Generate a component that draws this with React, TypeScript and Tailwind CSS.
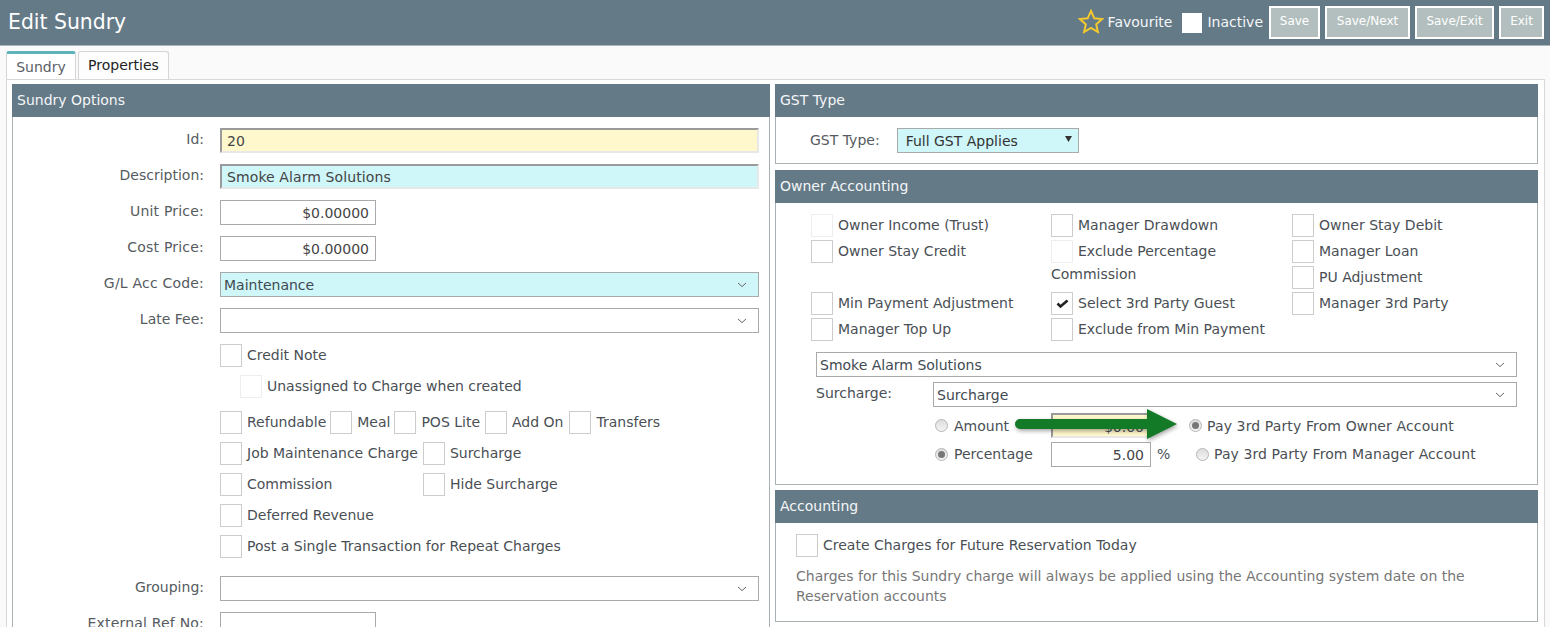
import React from "react";

const font = { fontFamily: '"DejaVu Sans", Verdana, sans-serif' };

function Chevron() {
  return (
    <svg width="10" height="6" viewBox="0 0 10 6" className="shrink-0">
      <path d="M1 1l4 3.6L9 1" fill="none" stroke="#666" strokeWidth="1" />
    </svg>
  );
}

function Box({ light, checked }: { light?: boolean; checked?: boolean }) {
  return (
    <span
      className={`inline-flex w-[22px] h-[23px] shrink-0 items-center justify-center border bg-white ${light ? "border-[#eeeeee]" : "border-[#cccccc]"}`}
    >
      {checked && (
        <svg width="13" height="11" viewBox="0 0 13 11">
          <path d="M1.5 5.500l3 3L11.500 2.500" fill="none" stroke="#222" strokeWidth="2.6" />
        </svg>
      )}
    </span>
  );
}

function Check({ label, light, checked, className = "" }: { label: string; light?: boolean; checked?: boolean; className?: string }) {
  return (
    <div className={`flex items-start gap-[5px] ${className}`}>
      <Box light={light} checked={checked} />
      <span className="leading-[23px] whitespace-nowrap text-[#4a4f55]">{label}</span>
    </div>
  );
}

function Panel({ title, className, children }: { title: string; className: string; children: React.ReactNode }) {
  return (
    <section className={`border border-[#a9b1b5] border-t-0 bg-white ${className}`}>
      <h2 className="m-0 h-[33px] -mx-px bg-[#647a87] pl-[5px] text-[14px] leading-[32px] font-normal text-[#f4f6f7]">{title}</h2>
      {children}
    </section>
  );
}

function Select({ value, bg = "bg-white", className = "" }: { value?: string; bg?: string; className?: string }) {
  return (
    <div className={`flex h-[25px] items-center justify-between border border-[#aaaaaa] pl-[3px] pr-[11px] text-[#3f4a52] ${bg} ${className}`}>
      <span className="pt-[1px]">{value}</span>
      <Chevron />
    </div>
  );
}

function Row({ label, wide, children }: { label: string; wide?: boolean; children: React.ReactNode }) {
  return (
    <div className="mb-[11px] flex h-[25px]">
      <label className={`w-[191px] shrink-0 text-right leading-[22px] text-[#555b60] ${wide ? "tracking-[0.2px]" : ""}`}>{label}</label>
      <div className="ml-[16px] w-[539px]">{children}</div>
    </div>
  );
}

function Money({ value }: { value?: string }) {
  return <div className="h-[25px] w-[156px] border border-[#aaaaaa] bg-white pr-[6px] text-right leading-[25px] text-[#444]">{value}</div>;
}

function Radio({ on }: { on?: boolean }) {
  return (
    <span className="inline-flex h-[13px] w-[13px] shrink-0 items-center justify-center rounded-full border border-[#b5b5b5] bg-gradient-to-b from-[#dddddd] to-[#f4f4f4]">
      {on && <span className="h-[7px] w-[7px] rounded-full bg-[#777]" />}
    </span>
  );
}

function Btn({ label, w }: { label: string; w: string }) {
  return (
    <button className={`h-[33px] ${w} border-2 border-white bg-[#b3bfbe] pb-[3px] text-[12px] text-white`}>{label}</button>
  );
}

export default function App() {
  return (
    <div style={font} className="relative h-[627px] w-[1550px] overflow-hidden bg-[#fafafa] text-[14px]">
      <header className="flex h-[46px] items-start justify-between border-b border-[#a9b5bb] bg-[#647a87]">
        <h1 className="m-0 ml-[8px] text-[20.4px] leading-[44px] font-normal text-white">Edit Sundry</h1>
        <div className="flex items-start pr-[6px]">
          <svg width="26" height="25" viewBox="0 0 26 25" className="mt-[9px]">
            <path d="M13 2l3.3 7.3 7.7.8-5.8 5.2 1.700 7.700L13 19l-6.900 4 1.700-7.700L2 10.100l7.700-.8z" fill="none" stroke="#f4c92e" strokeWidth="2" />
          </svg>
          <span className="ml-[4px] mt-[12px] text-[#f4f6f7]">Favourite</span>
          <span className="ml-[10px] mt-[13px] h-[20px] w-[20px] bg-white" />
          <span className="ml-[5px] mt-[12px] mr-[6px] text-[#f4f6f7]">Inactive</span>
          <div className="mt-[6px] flex gap-[5px]">
            <Btn label="Save" w="w-[51px]" />
            <Btn label="Save/Next" w="w-[85px]" />
            <Btn label="Save/Exit" w="w-[79px]" />
            <Btn label="Exit" w="w-[45px]" />
          </div>
        </div>
      </header>

      <nav className="ml-[6px] mt-[5px] flex h-[28px] items-end gap-[2px]">
        <div className="h-[28px] w-[70px] rounded-t-[3px] border border-b-0 border-t-[3px] border-[#d5d5d5] border-t-[#5fb3bd] bg-white pt-[3px] text-center text-[#5b6166]">Sundry</div>
        <div className="h-[28px] w-[91px] rounded-t-[3px] border border-b-0 border-[#d5d5d5] bg-[#fdfdfd] pt-[3px] text-center text-[#222]">Properties</div>
      </nav>

      <main className="ml-[6px] mr-[5px] flex h-[560px] gap-[5px] border border-[#d8d8d8] bg-white pl-[5px] pr-[6px] pt-[4px]">
        <Panel title="Sundry Options" className="h-[600px] w-[758px] shrink-0">
          <div className="pt-[11px]">
            <Row label="Id:">
              <div className="h-[25px] border-[2px] border-b-[#e8e8e8] border-r-[#e8e8e8] border-[#9a9a9a] bg-[#fff8cd] pl-[5px] leading-[23px] text-[#444]">20</div>
            </Row>
            <Row label="Description:">
              <div className="h-[25px] border-[2px] border-b-[#e8e8e8] border-r-[#e8e8e8] border-[#9a9a9a] bg-[#cff6f9] pl-[5px] leading-[23px] tracking-[0.1px] text-[#444]">Smoke Alarm Solutions</div>
            </Row>
            <Row label="Unit Price:" wide><Money value="$0.00000" /></Row>
            <Row label="Cost Price:" wide><Money value="$0.00000" /></Row>
            <Row label="G/L Acc Code:" wide><Select value="Maintenance" bg="bg-[#cff6f9]" /></Row>
            <Row label="Late Fee:"><Select /></Row>

            <div className="ml-[207px]">
              <Check label="Credit Note" className="h-[31px]" />
              <Check label="Unassigned to Charge when created" light className="ml-[20px] h-[36px]" />
              <div className="flex h-[31px]">
                <Check label="Refundable" />
                <Check label="Meal" className="ml-[4px]" />
                <Check label="POS Lite" className="ml-[4px]" />
                <Check label="Add On" className="ml-[5px]" />
                <Check label="Transfers" className="ml-[6px]" />
              </div>
              <div className="flex h-[31px]">
                <Check label="Job Maintenance Charge" />
                <Check label="Surcharge" className="ml-[5px]" />
              </div>
              <div className="flex h-[31px]">
                <div className="w-[203px]"><Check label="Commission" /></div>
                <Check label="Hide Surcharge" />
              </div>
              <Check label="Deferred Revenue" className="h-[31px]" />
              <Check label="Post a Single Transaction for Repeat Charges" className="h-[41px]" />
            </div>

            <Row label="Grouping:"><Select /></Row>
            <Row label="External Ref No:" wide><Money /></Row>
          </div>
        </Panel>

        <div className="flex min-w-0 flex-1 flex-col gap-[6px]">
          <Panel title="GST Type" className="h-[80px]">
            <div className="flex items-start pt-[11px] pl-[34px]">
              <span className="mt-[2px] text-[#555b60]">GST Type:</span>
              <div className="ml-[17px] flex h-[25px] w-[182px] items-center justify-between border border-[#aaaaaa] bg-[#cff6f9] pl-[8px] pr-[6px] text-[#333]">
                <span className="pt-[1px]">Full GST Applies</span>
                <svg width="7" height="6" viewBox="0 0 7 6" className="mb-[3px]">
                  <path d="M0 0h7L3.500 6z" fill="#333" />
                </svg>
              </div>
            </div>
          </Panel>

          <Panel title="Owner Accounting" className="h-[315px]">
            <div className="flex pl-[35px] pt-[11px]">
              <div className="w-[240px]">
                <Check label="Owner Income (Trust)" light className="h-[26px]" />
                <Check label="Owner Stay Credit" className="h-[52px]" />
                <Check label="Min Payment Adjustment" className="h-[26px]" />
                <Check label="Manager Top Up" className="h-[26px]" />
              </div>
              <div className="w-[241px]">
                <Check label="Manager Drawdown" className="h-[26px]" />
                <div className="h-[52px] leading-[23px] text-[#4a4f55]">
                  <Check label="Exclude Percentage" light />
                  <span>Commission</span>
                </div>
                <Check label="Select 3rd Party Guest" checked className="h-[26px]" />
                <Check label="Exclude from Min Payment" className="h-[26px]" />
              </div>
              <div>
                <Check label="Owner Stay Debit" className="h-[26px]" />
                <Check label="Manager Loan" className="h-[26px]" />
                <Check label="PU Adjustment" className="h-[26px]" />
                <Check label="Manager 3rd Party" className="h-[26px]" />
              </div>
            </div>
            <div className="ml-[40px] mr-[20px] mt-[8px]">
              <Select value="Smoke Alarm Solutions" />
              <div className="mt-[5px] flex">
                <span className="w-[117px] leading-[23px] text-[#4a4f55]">Surcharge:</span>
                <Select value="Surcharge" className="flex-1" />
              </div>
              <div className="mt-[6px] flex h-[25px] items-center pl-[119px] text-[#4a4f55]">
                <Radio />
                <span className="ml-[6px] w-[97px] pt-[1px]">Amount</span>
                <div className="h-[25px] w-[100px] border-[2px] border-b-[#e8e8e8] border-r-[#e8e8e8] border-[#9a9a9a] bg-[#fff8cd] pr-[5px] text-right leading-[25px]">$0.00</div>
                <span className="ml-[38px] inline-flex"><Radio on /></span>
                <span className="ml-[5px] pt-[1px] tracking-[0.12px]">Pay 3rd Party From Owner Account</span>
              </div>
              <div className="mt-[4px] flex h-[25px] items-center pl-[119px] text-[#4a4f55]">
                <Radio on />
                <span className="ml-[6px] w-[97px]">Percentage</span>
                <div className="h-[25px] w-[100px] border border-[#aaaaaa] bg-white pr-[6px] text-right leading-[24px] text-[#444]">5.00</div>
                <span className="ml-[6px] w-[39px]">%</span>
                <Radio />
                <span className="ml-[5px] tracking-[0.09px]">Pay 3rd Party From Manager Account</span>
              </div>
            </div>
          </Panel>

          <Panel title="Accounting" className="-mt-px h-[132px]">
            <div className="px-[20px] pt-[11px]">
              <Check label="Create Charges for Future Reservation Today" />
              <p className="m-0 mt-[9px] leading-[20px] text-[#777]">
                Charges for this Sundry charge will always be applied using the Accounting system date on the Reservation accounts
              </p>
            </div>
          </Panel>
        </div>
      </main>

      <svg width="175" height="36" viewBox="0 0 175 36" className="absolute left-[1012px] top-[407px] drop-shadow-[1px_2px_2px_rgba(0,0,0,0.35)]">
        <path d="M8 12H135V2L165 17 135 32V22H8a5 5 0 0 1 0-10z" fill="#137a27" />
      </svg>
    </div>
  );
}
